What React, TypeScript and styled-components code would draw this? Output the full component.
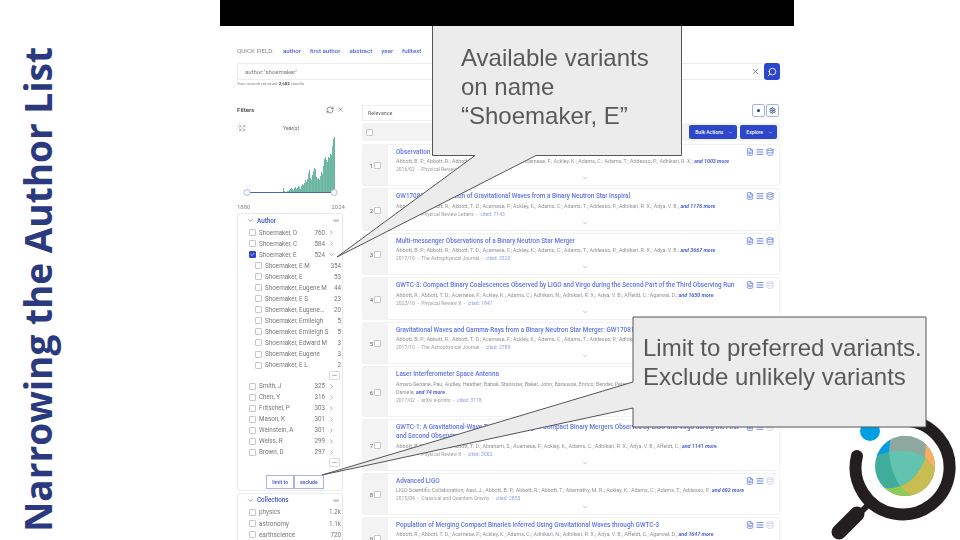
import React from "react";
import styled, { createGlobalStyle } from "styled-components";
import { AlignJustify, ChevronDown, ChevronRight, Check, Database, Ellipsis, Expand, FileText, RefreshCw, Search, Settings, X } from "lucide-react";

const GlobalStyle = createGlobalStyle`
	html, body { margin: 0; padding: 0; background: #fff; }
	body { font-family: Roboto, "Liberation Sans", sans-serif; }
`;

type FacetRow = { name: string; count: string; open?: boolean; checked?: boolean };
type ResultRow = { title: string; authors: string; more: string; date: string; source: string; cited: string; faded?: boolean };

const topAuthors: FacetRow[] = [
	{ name: "Shoemaker, D", count: "760" },
	{ name: "Shoemaker, C", count: "584" },
	{ name: "Shoemaker, E", count: "524", open: true, checked: true },
];

const variants: FacetRow[] = [
	{ name: "Shoemaker, E M", count: "354" },
	{ name: "Shoemaker, E", count: "53" },
	{ name: "Shoemaker, Eugene M", count: "44" },
	{ name: "Shoemaker, E S", count: "23" },
	{ name: "Shoemaker, Eugene...", count: "20" },
	{ name: "Shoemaker, Emileigh", count: "5" },
	{ name: "Shoemaker, Emileigh S", count: "5" },
	{ name: "Shoemaker, Edward M", count: "3" },
	{ name: "Shoemaker, Eugene", count: "3" },
	{ name: "Shoemaker, E L", count: "2" },
];

const otherAuthors: FacetRow[] = [
	{ name: "Smith, J", count: "325" },
	{ name: "Chen, Y", count: "316" },
	{ name: "Fritschel, P", count: "303" },
	{ name: "Mason, K", count: "301" },
	{ name: "Weinstein, A", count: "301" },
	{ name: "Weiss, R", count: "299" },
	{ name: "Brown, D", count: "297" },
];

const collections: FacetRow[] = [
	{ name: "physics", count: "1.2k" },
	{ name: "astronomy", count: "1.1k" },
	{ name: "earthscience", count: "720" },
];

const results: ResultRow[] = [
	{
		title: "Observation of Gravitational Waves from a Binary Black Hole Merger",
		authors: "Abbott, B. P.; Abbott, R.; Abbott, T. D.; Abernathy, M. R.; Acernese, F.; Ackley, K.; Adams, C.; Adams, T.; Addesso, P.; Adhikari, R. X.;",
		more: "and 1003 more",
		date: "2016/02",
		source: "Physical Review Letters",
		cited: "cited: 8120",
	},
	{
		title: "GW170817: Observation of Gravitational Waves from a Binary Neutron Star Inspiral",
		authors: "Abbott, B. P.; Abbott, R.; Abbott, T. D.; Acernese, F.; Ackley, K.; Adams, C.; Adams, T.; Addesso, P.; Adhikari, R. X.; Adya, V. B.;",
		more: "and 1176 more",
		date: "2017/10",
		source: "Physical Review Letters",
		cited: "cited: 7143",
	},
	{
		title: "Multi-messenger Observations of a Binary Neutron Star Merger",
		authors: "Abbott, B. P.; Abbott, R.; Abbott, T. D.; Acernese, F.; Ackley, K.; Adams, C.; Adams, T.; Addesso, P.; Adhikari, R. X.; Adya, V. B.;",
		more: "and 3667 more",
		date: "2017/10",
		source: "The Astrophysical Journal",
		cited: "cited: 3320",
	},
	{
		title: "GWTC-3: Compact Binary Coalescences Observed by LIGO and Virgo during the Second Part of the Third Observing Run",
		authors: "Abbott, R.; Abbott, T. D.; Acernese, F.; Ackley, K.; Adams, C.; Adhikari, N.; Adhikari, R. X.; Adya, V. B.; Affeldt, C.; Agarwal, D.;",
		more: "and 1650 more",
		date: "2023/10",
		source: "Physical Review X",
		cited: "cited: 1847",
		faded: true,
	},
	{
		title: "Gravitational Waves and Gamma-Rays from a Binary Neutron Star Merger: GW170817 and GRB 170817A",
		authors: "Abbott, B. P.; Abbott, R.; Abbott, T. D.; Acernese, F.; Ackley, K.; Adams, C.; Adams, T.; Addesso, P.; Adhikari, R. X.; Adya, V. B.;",
		more: "and 1173 more",
		date: "2017/10",
		source: "The Astrophysical Journal",
		cited: "cited: 2788",
	},
	{
		title: "Laser Interferometer Space Antenna",
		authors: "Amaro-Seoane, Pau; Audley, Heather; Babak, Stanislav; Baker, John; Barausse, Enrico; Bender, Peter; Berti, Emanuele; Binetruy, Pierre; Born, Michael; Bortoluzzi, Daniele;",
		more: "and 74 more",
		date: "2017/02",
		source: "arXiv e-prints",
		cited: "cited: 3118",
	},
	{
		title: "GWTC-1: A Gravitational-Wave Transient Catalog of Compact Binary Mergers Observed by LIGO and Virgo during the First and Second Observing Runs",
		authors: "Abbott, B. P.; Abbott, R.; Abbott, T. D.; Abraham, S.; Acernese, F.; Ackley, K.; Adams, C.; Adhikari, R. X.; Adya, V. B.; Affeldt, C.;",
		more: "and 1141 more",
		date: "2019/09",
		source: "Physical Review X",
		cited: "cited: 3002",
		faded: true,
	},
	{
		title: "Advanced LIGO",
		authors: "LIGO Scientific Collaboration; Aasi, J.; Abbott, B. P.; Abbott, R.; Abbott, T.; Abernathy, M. R.; Ackley, K.; Adams, C.; Adams, T.; Addesso, P.;",
		more: "and 692 more",
		date: "2015/04",
		source: "Classical and Quantum Gravity",
		cited: "cited: 2853",
		faded: true,
	},
	{
		title: "Population of Merging Compact Binaries Inferred Using Gravitational Waves through GWTC-3",
		authors: "Abbott, R.; Abbott, T. D.; Acernese, F.; Ackley, K.; Adams, C.; Adhikari, N.; Adhikari, R. X.; Adya, V. B.; Affeldt, C.; Agarwal, D.;",
		more: "and 1647 more",
		date: "2023/04",
		source: "Physical Review X",
		cited: "cited: 1032",
		faded: true,
	},
];

// year histogram, one value per pixel from 1880 on the left
const histogram = [
	0, 0, 0, 0, 0, 0, 0, 0, 0, 0, 0, 0, 0, 0, 0, 0, 0, 0, 0, 0, 0, 0, 0, 0, 0, 0, 0, 0, 0, 0, 0, 0, 0, 0, 0, 0, 4, 1, 0, 0, 1, 1, 2, 3, 4, 3, 2, 4, 5, 3,
	4, 6, 5, 3, 6, 8, 7, 9, 12, 10, 13, 19, 22, 14, 12, 17, 21, 24, 23, 15, 13, 14, 12, 16, 20, 18, 26, 33, 35, 32, 30, 35, 34, 38, 37, 46, 53, 55,
];

const Slide = styled.div`
	position: relative;
	display: flex;
	width: 960px;
	height: 540px;
	overflow: hidden;
	background: #fff;
`;

const SideColumn = styled.div`
	display: flex;
	flex: 0 0 220px;
	padding: 0 0 8px 16px;
	align-items: flex-end;
	box-sizing: border-box;
`;

const SideTitle = styled.h1`
	margin: 0;
	writing-mode: vertical-rl;
	transform: rotate(180deg);
	font-family: "Open Sans", sans-serif;
	font-size: 37px;
	line-height: 44px;
	font-weight: 700;
	color: #2b3a7e;
	white-space: nowrap;
`;

const Screenshot = styled.div`
	flex: 0 0 574px;
	height: 540px;
	overflow: hidden;
	filter: blur(0.3px);
`;

const BlackBar = styled.div`
	height: 26px;
	background: #000;
`;

const Page = styled.div`
	padding: 21px 14px 0 17px;
`;

const QuickField = styled.div`
	display: flex;
	align-items: center;
	height: 8px;
	font-size: 6.2px;
	color: #888;
`;

const QuickLink = styled.span`
	margin-left: 9px;
	font-weight: 500;
	color: #5566d4;
`;

const SearchRow = styled.div`
	display: flex;
	height: 17px;
	margin-top: 8px;
`;

const SearchInput = styled.div`
	display: flex;
	flex: 1;
	align-items: center;
	justify-content: space-between;
	padding: 0 4px 0 7px;
	font-size: 6px;
	color: #777;
	border: 1px solid #ececec;
	border-right: none;
	border-radius: 2px 0 0 2px;
`;

const SearchButton = styled.div`
	display: flex;
	width: 16px;
	align-items: center;
	justify-content: center;
	background: #2c47c9;
	border-radius: 3px;
	color: #fff;
	svg { transform: scaleX(-1); }
`;

const ResultCount = styled.div`
	margin-top: 1px;
	font-size: 4.4px;
	line-height: 6px;
	color: #888;
	b { color: #555; }
`;

const Columns = styled.div`
	display: flex;
	gap: 17px;
	margin-top: 18px;
`;

const Sidebar = styled.div`
	flex: 0 0 108px;
`;

const FiltersHead = styled.div`
	display: flex;
	align-items: center;
	justify-content: space-between;
	height: 10px;
	padding-right: 1px;
	font-size: 6.2px;
	font-weight: 700;
	color: #555;
`;

const HeadIcons = styled.div`
	display: flex;
	gap: 3px;
	color: #666;
`;

const YearHead = styled.div`
	display: flex;
	align-items: center;
	height: 9px;
	margin-top: 8px;
	font-size: 5.2px;
	color: #666;
`;

const ExpandBox = styled.span`
	display: flex;
	width: 9px;
	height: 9px;
	align-items: center;
	justify-content: center;
	border: 1px solid #eee;
	border-radius: 1px;
	box-sizing: border-box;
	color: #777;
`;

const YearLabel = styled.span`
	margin-left: 37px;
`;

const ChartSvg = styled.svg`
	display: block;
	margin-top: 5px;
`;

const YearRange = styled.div`
	display: flex;
	justify-content: space-between;
	font-size: 6px;
	line-height: 9px;
	color: #888;
`;

const FacetCard = styled.div`
	margin-top: 2px;
	width: 106px;
	box-sizing: border-box;
	padding: 2px 1px 1px 1px;
	border: 1px solid #eaeaea;
	border-radius: 2px;
`;

const FacetHead = styled.div`
	display: flex;
	align-items: center;
	height: 9px;
	margin-bottom: 2px;
	font-size: 6.3px;
	font-weight: 500;
	color: #4256c6;
`;

const GripDots = styled.span`
	width: 4px;
	height: 7px;
	margin-right: 4px;
	background-image: radial-gradient(circle, #999 0.5px, transparent 0.6px);
	background-size: 2px 2px;
`;

const FacetName = styled.span`
	margin-left: 3px;
`;

const EyeDot = styled.span`
	width: 6px;
	height: 3px;
	margin-left: auto;
	margin-right: 2px;
	background: #ccc;
	border-radius: 50%;
`;

const Row = styled.div<{ $nested?: boolean }>`
	display: flex;
	align-items: center;
	height: 11.05px;
	padding-left: ${(p) => (p.$nested ? 16 : 10)}px;
	font-size: 6.3px;
	color: #777;
	white-space: nowrap;
`;

const Box = styled.span<{ $checked?: boolean }>`
	display: inline-flex;
	flex: none;
	align-items: center;
	justify-content: center;
	width: 7px;
	height: 7px;
	box-sizing: border-box;
	border: 0.7px solid ${(p) => (p.$checked ? "#2c47c9" : "#c8c8c8")};
	border-radius: 1px;
	background: ${(p) => (p.$checked ? "#2c47c9" : "#fff")};
	color: #fff;
`;

const RowName = styled.span`
	margin-left: 3px;
`;

const RowCount = styled.span`
	margin-left: auto;
`;

const RowChevron = styled.span`
	display: flex;
	width: 12px;
	margin-right: 4px;
	justify-content: center;
	color: #777;
`;

const MoreRow = styled.div`
	display: flex;
	justify-content: flex-end;
	height: 10px;
	padding-right: 1px;
	color: #777;
`;

const MoreButton = styled.span`
	display: flex;
	width: 9px;
	height: 7px;
	align-items: center;
	justify-content: center;
	border: 0.7px solid #ddd;
	border-radius: 1px;
`;

const ActionRow = styled.div`
	display: flex;
	justify-content: center;
	margin-top: 7px;
	padding-left: 10px;
`;

const ActionButton = styled.span`
	display: flex;
	height: 14px;
	align-items: center;
	padding: 0 5px;
	font-size: 5.1px;
	font-weight: 500;
	color: #4256c6;
	border: 0.7px solid #a8b4e6;
	box-sizing: border-box;
`;

const Results = styled.div`
	flex: 1;
	min-width: 0;
`;

const SortRow = styled.div`
	display: flex;
	align-items: flex-start;
	justify-content: space-between;
	height: 16px;
`;

const SortSelect = styled.div`
	display: flex;
	width: 150px;
	height: 16px;
	align-items: center;
	padding-left: 5px;
	box-sizing: border-box;
	border: 1px solid #eee;
	font-size: 5.4px;
	color: #666;
`;

const SortTools = styled.div`
	display: flex;
	gap: 1px;
	margin: -1px 1px 0 0;
`;

const ToolButton = styled.span`
	display: flex;
	width: 13px;
	height: 13px;
	align-items: center;
	justify-content: center;
	box-sizing: border-box;
	border: 0.7px solid #a8b4e6;
	border-radius: 2px;
	color: #223a9c;
`;

const ToolDot = styled.span`
	width: 3px;
	height: 3px;
	border-radius: 50%;
	background: #223a9c;
`;

const BulkBar = styled.div`
	display: flex;
	align-items: center;
	justify-content: flex-end;
	gap: 3px;
	height: 18px;
	margin-top: 2px;
	padding: 0 3px 0 4px;
	background: #f3f3f3;
	> :first-child { margin-right: auto; }
`;

const BulkButton = styled.span`
	display: flex;
	height: 14px;
	align-items: center;
	gap: 5px;
	padding: 0 4px 0 6px;
	font-size: 5px;
	font-weight: 500;
	color: #fff;
	background: #2c47c9;
	border-radius: 2px;
`;

const ResultList = styled.div`
	display: flex;
	flex-direction: column;
	gap: 2px;
	margin-top: 3px;
`;

const ResultCard = styled.div`
	display: flex;
	min-height: 42.3px;
	box-sizing: border-box;
	border: 1px solid #f2f2f2;
	border-radius: 2px;
`;

const IndexCell = styled.div`
	display: flex;
	flex: 0 0 25px;
	align-items: center;
	justify-content: center;
	gap: 1px;
	padding-top: 1px;
	font-size: 6px;
	color: #666;
	background: #f3f3f3;
`;

const Body = styled.div`
	display: flex;
	flex: 1;
	min-width: 0;
	flex-direction: column;
	padding: 3px 5px 3px 8px;
`;

const TitleLine = styled.div`
	display: flex;
	justify-content: space-between;
	gap: 2px;
`;

const Title = styled.div`
	font-size: 6.35px;
	line-height: 9.3px;
	font-weight: 500;
	color: #5f73e6;
`;

const ActionIcons = styled.div`
	display: flex;
	flex: none;
	gap: 2px;
	color: #5a78d8;
`;

const DbIcon = styled.span<{ $faded?: boolean }>`
	display: flex;
	color: ${(p) => (p.$faded ? "#c3cce8" : "#5a78d8")};
`;

const Authors = styled.div`
	max-width: 378px;
	font-size: 5.3px;
	line-height: 8px;
	color: #929292;
	em { font-weight: 700; color: #4f63d2; }
`;

const Meta = styled.div`
	display: flex;
	gap: 2.5px;
	font-size: 5px;
	line-height: 8px;
	color: #a0a0a0;
	span:last-child { color: #8fa0e4; }
`;

const ExpandChevron = styled.div`
	display: flex;
	flex: none;
	justify-content: center;
	box-sizing: content-box;
	margin-top: auto;
	padding-top: 2.2px;
	height: 7px;
	color: #888;
`;

const Logo = styled.svg`
	position: absolute;
	left: 820px;
	top: 400px;
`;

const CalloutShapes = styled.svg`
	position: absolute;
	left: 0;
	top: 0;
`;

const CalloutText = styled.div<{ $left: number; $top: number }>`
	position: absolute;
	left: ${(p) => p.$left}px;
	top: ${(p) => p.$top}px;
	font-family: "Liberation Sans", Arial, sans-serif;
	font-size: 24px;
	line-height: 28.8px;
	color: #595959;
	white-space: pre;
`;

const YearChart = () => (
	<ChartSvg width="108" height="65" viewBox="0 0 108 65">
		{histogram.map((h, i) =>
			h > 0 ? <rect key={i} x={10 + i} y={55 - h} width="1" height={h} fill={i % 3 === 1 ? "#78bda7" : "#6bb6a0"} /> : null
		)}
		<line x1="10" y1="55.5" x2="97" y2="55.5" stroke="#4a62b8" strokeWidth="1.2" />
		<circle cx="10" cy="55.5" r="3" fill="#fff" stroke="#98a8de" strokeWidth="0.8" />
		<circle cx="97" cy="55.5" r="3" fill="#fff" stroke="#98a8de" strokeWidth="0.8" />
	</ChartSvg>
);

const FacetLine = ({ name, count, open, checked }: FacetRow) => (
	<Row>
		<Box $checked={checked}>{checked && <Check size={5} strokeWidth={3} />}</Box>
		<RowName>{name}</RowName>
		<RowCount>{count}</RowCount>
		<RowChevron>{open ? <ChevronDown size={7} /> : <ChevronRight size={7} />}</RowChevron>
	</Row>
);

const NestedLine = ({ name, count }: FacetRow) => (
	<Row $nested>
		<Box />
		<RowName>{name}</RowName>
		<RowCount>{count}</RowCount>
	</Row>
);

const More = () => (
	<MoreRow>
		<MoreButton>
			<Ellipsis size={5} />
		</MoreButton>
	</MoreRow>
);

const ResultItem = ({ row, index }: { row: ResultRow; index: number }) => (
	<ResultCard>
		<IndexCell>
			{index}
			<Box />
		</IndexCell>
		<Body>
			<TitleLine>
				<Title>{row.title}</Title>
				<ActionIcons>
					<FileText size={8} strokeWidth={2.2} />
					<AlignJustify size={8} strokeWidth={2.6} />
					<DbIcon $faded={row.faded}>
						<Database size={8} strokeWidth={2.2} />
					</DbIcon>
				</ActionIcons>
			</TitleLine>
			<Authors>
				{row.authors} <em>{row.more}</em>
			</Authors>
			<Meta>
				<span>{row.date}</span>
				<span>-</span>
				<span>{row.source}</span>
				<span>-</span>
				<span>{row.cited}</span>
			</Meta>
			<ExpandChevron>
				<ChevronDown size={6} />
			</ExpandChevron>
		</Body>
	</ResultCard>
);

const App = () => (
	<Slide>
		<GlobalStyle />
		<SideColumn>
			<SideTitle>Narrowing the Author List</SideTitle>
		</SideColumn>
		<Screenshot>
			<BlackBar />
			<Page>
				<QuickField>
					QUICK FIELD:
					<QuickLink>author</QuickLink>
					<QuickLink>first author</QuickLink>
					<QuickLink>abstract</QuickLink>
					<QuickLink>year</QuickLink>
					<QuickLink>fulltext</QuickLink>
				</QuickField>
				<SearchRow>
					<SearchInput>
						author:"shoemaker"
						<X size={9} color="#666" />
					</SearchInput>
					<SearchButton>
						<Search size={10} />
					</SearchButton>
				</SearchRow>
				<ResultCount>
					Your search returned <b>2,682</b> results
				</ResultCount>
				<Columns>
					<Sidebar>
						<FiltersHead>
							Filters
							<HeadIcons>
								<RefreshCw size={8} />
								<X size={7} />
							</HeadIcons>
						</FiltersHead>
						<YearHead>
							<ExpandBox>
								<Expand size={6} />
							</ExpandBox>
							<YearLabel>Year(s)</YearLabel>
						</YearHead>
						<YearChart />
						<YearRange>
							<span>1880</span>
							<span>2024</span>
						</YearRange>
						<FacetCard>
							<FacetHead>
								<GripDots />
								<ChevronDown size={7} />
								<FacetName>Author</FacetName>
								<EyeDot />
							</FacetHead>
							{topAuthors.map((a) => (
								<FacetLine key={a.name} {...a} />
							))}
							{variants.map((a) => (
								<NestedLine key={a.name} {...a} />
							))}
							<More />
							{otherAuthors.map((a) => (
								<FacetLine key={a.name} {...a} />
							))}
							<More />
							<ActionRow>
								<ActionButton>limit to</ActionButton>
								<ActionButton>exclude</ActionButton>
							</ActionRow>
						</FacetCard>
						<FacetCard>
							<FacetHead>
								<GripDots />
								<ChevronDown size={7} />
								<FacetName>Collections</FacetName>
								<EyeDot />
							</FacetHead>
							{collections.map((a) => (
								<Row key={a.name}>
									<Box />
									<RowName>{a.name}</RowName>
									<RowCount>{a.count}</RowCount>
								</Row>
							))}
						</FacetCard>
					</Sidebar>
					<Results>
						<SortRow>
							<SortSelect>Relevance</SortSelect>
							<SortTools>
								<ToolButton>
									<ToolDot />
								</ToolButton>
								<ToolButton>
									<Settings size={7} strokeWidth={3} />
								</ToolButton>
							</SortTools>
						</SortRow>
						<BulkBar>
							<Box />
							<BulkButton>
								Bulk Actions <ChevronDown size={5} />
							</BulkButton>
							<BulkButton>
								Explore <ChevronDown size={5} />
							</BulkButton>
						</BulkBar>
						<ResultList>
							{results.map((r, i) => (
								<ResultItem key={r.title} row={r} index={i + 1} />
							))}
						</ResultList>
					</Results>
				</Columns>
			</Page>
		</Screenshot>

		<Logo width="140" height="140" viewBox="820 400 140 140">
			<defs>
				<clipPath id="ball">
					<circle cx="905" cy="466" r="30" />
				</clipPath>
			</defs>
			<circle cx="870" cy="431" r="10" fill="#009fe3" />
			<path d="M857 456A47 47 0 1 0 905 420.5" fill="none" stroke="#231f20" strokeWidth="12" strokeLinecap="round" />
			<path d="M856 517L870 503" stroke="#231f20" strokeWidth="6" />
			<path d="M839 532L857 514" stroke="#231f20" strokeWidth="15" strokeLinecap="round" />
			<g clipPath="url(#ball)">
				<rect x="870" y="430" width="70" height="70" fill="#40ac9c" />
				<path d="M870 430H895V437L889 452L875 456L870 460Z" fill="#009fe3" />
				<path d="M893 430H930L925 458Q910 450 889 452Q889 445 893 430Z" fill="#8fa89f" />
				<path d="M927 430H940V471H935Q932 465 925 458Z" fill="#fbae5b" />
				<path d="M925 458L936 471L940 500H912L900 486Q917 480 925 458Z" fill="#c9bc50" />
				<path d="M880 487Q892 490 900 486L912 497V500H880Z" fill="#8fcb55" />
				<path d="M889 452Q910 448 925 458Q917 480 900 486Q890 470 889 452Z" fill="#62c3b0" />
			</g>
		</Logo>

		<CalloutShapes width="960" height="540" viewBox="0 0 960 540">
			<path d="M432.5 26V155.5H475L337 257L536 155.5H681.5V26" fill="#ececec" stroke="#555" strokeWidth="1" />
			<path d="M633 317H926V427H633V408L322 475L633 382Z" fill="#ececec" stroke="#555" strokeWidth="1" />
		</CalloutShapes>
		<CalloutText $left={461} $top={44}>{"Available variants\non name\n“Shoemaker, E”"}</CalloutText>
		<CalloutText $left={643} $top={334}>{"Limit to preferred variants.\nExclude unlikely variants"}</CalloutText>
	</Slide>
);

export default App;
